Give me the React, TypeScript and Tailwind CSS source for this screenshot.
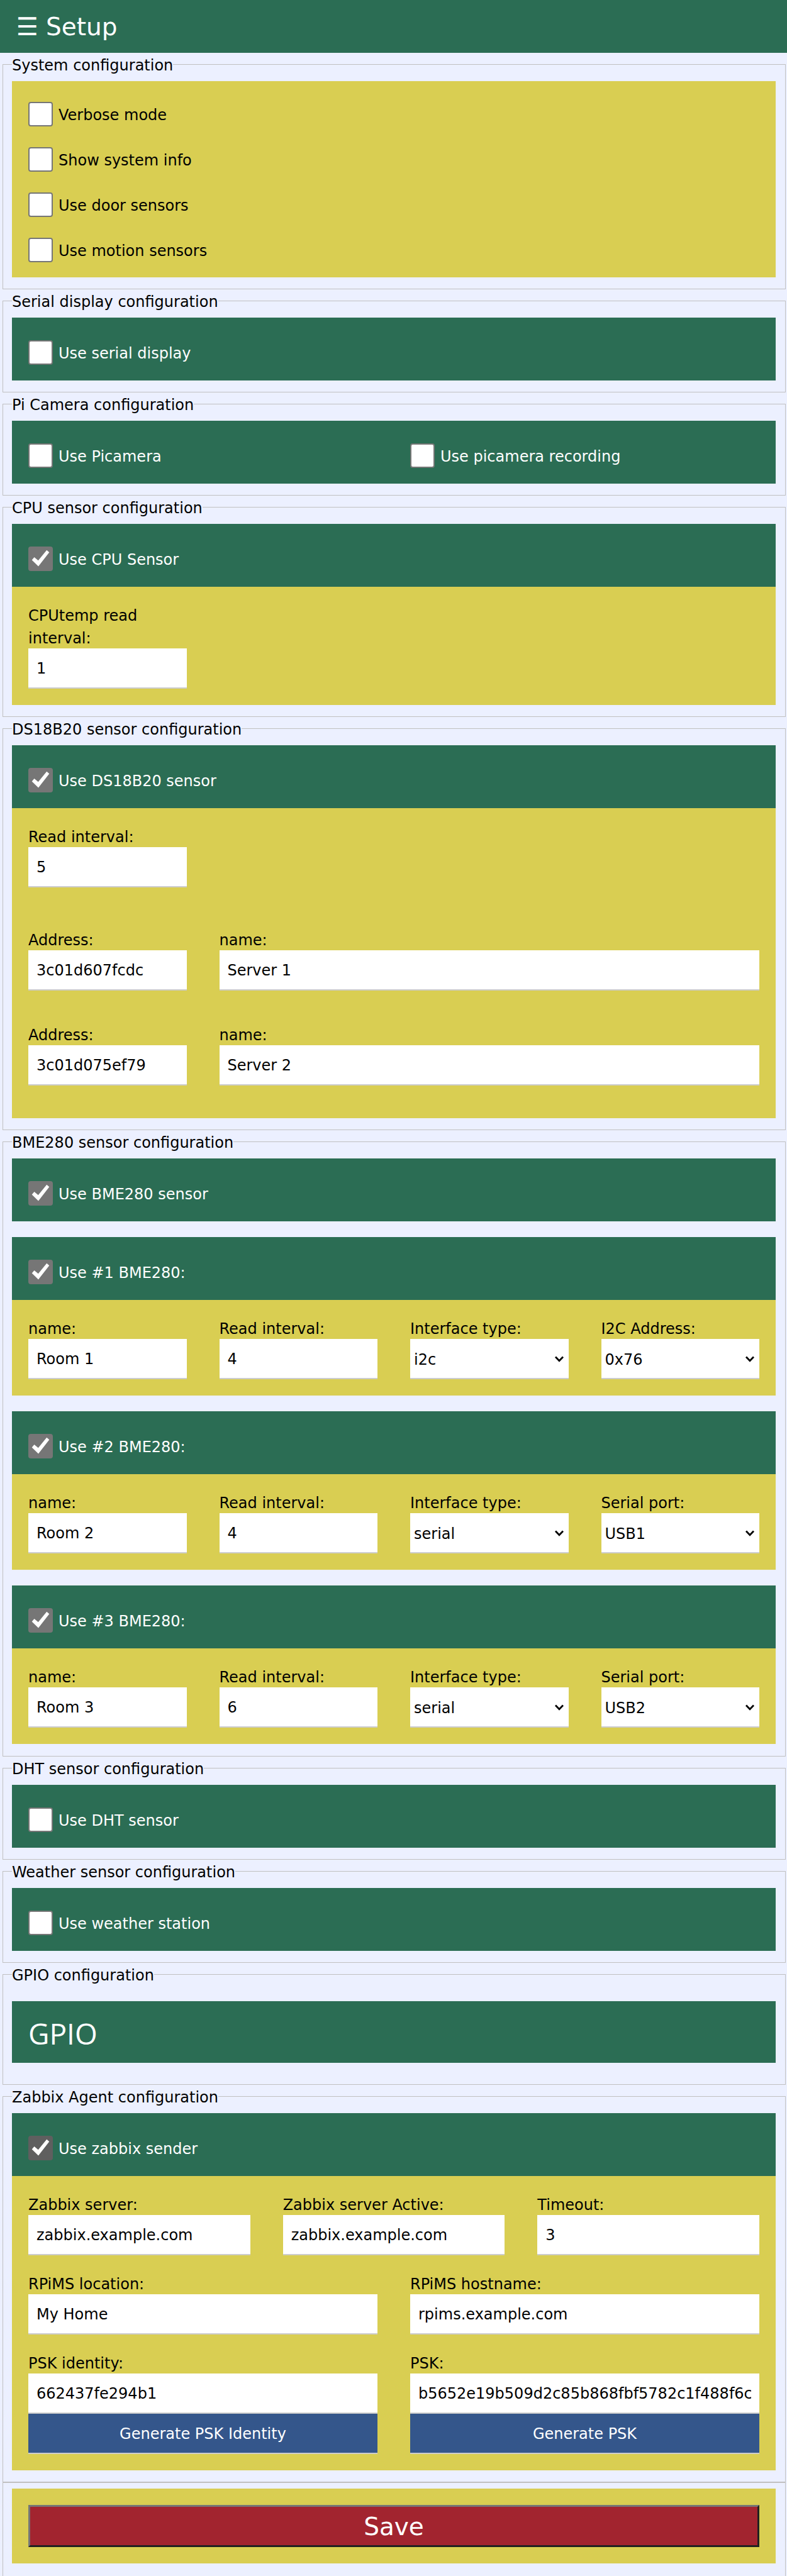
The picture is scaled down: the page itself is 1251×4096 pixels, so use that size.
import React from "react";

function Section({ title, children }: { title: string; children: React.ReactNode }) {
  return (
    <fieldset className="ml-1 mr-0.5 min-w-0 border border-[#c0c0c0] pt-[9px] pr-[15px] pb-[18px] pl-[14px]">
      <legend className="leading-[36px]">
        <span className="-mb-0.5 block pt-0.5">{title}</span>
      </legend>
      {children}
    </fieldset>
  );
}

function Check({ label, checked = false, active = false }: { label: string; checked?: boolean; active?: boolean }) {
  return (
    <label className="flex items-center gap-[9px]">
      <span className="grid shrink-0">
        <input
          type="checkbox"
          defaultChecked={checked}
          className={
            "peer col-start-1 row-start-1 size-[39px] appearance-none rounded-[4px] border-2 border-[#767676] bg-white " +
            (active ? "checked:border-[#5f5f5f] checked:bg-[#5f5f5f]" : "checked:bg-[#767676]")
          }
        />
        <svg
          viewBox="0 0 48 48"
          aria-hidden="true"
          className="pointer-events-none invisible col-start-1 row-start-1 size-[39px] peer-checked:visible"
        >
          <path d="M7 26.5 11.7 21 19.4 27.5 36 7 41 11.5 19.7 38.7Z" fill="#fff" />
        </svg>
      </span>
      <span className="pt-[3px] leading-[36px]">{label}</span>
    </label>
  );
}

function GreenBar({ children }: { children: React.ReactNode }) {
  return <div className="grid grid-cols-2 bg-[#2b6d54] pt-9 pb-[25px] text-white">{children}</div>;
}

function Cell({ children, className = "" }: { children: React.ReactNode; className?: string }) {
  return <div className={"min-w-0 px-[26px] " + className}>{children}</div>;
}

function Field({ label, value, className = "" }: { label: string; value: string; className?: string }) {
  return (
    <label className={"block min-w-0 px-[26px] " + className}>
      <span className="-mb-0.5 block pt-0.5 leading-[36px]">{label}</span>
      <input
        type="text"
        defaultValue={value}
        className="block h-16 w-full border-b-2 border-[#ccc] bg-white px-[13px] pt-0.5 text-black outline-none"
      />
    </label>
  );
}

function SelectField({ label, value, options }: { label: string; value: string; options: string[] }) {
  return (
    <label className="block min-w-0 px-[26px]">
      <span className="-mb-0.5 block pt-0.5 leading-[36px]">{label}</span>
      <span className="grid items-center">
        <select
          defaultValue={value}
          className="col-start-1 row-start-1 h-16 w-full appearance-none border-b-2 border-[#ccc] bg-white px-[6px] pt-1 text-black outline-none"
        >
          {options.map((o) => (
            <option key={o}>{o}</option>
          ))}
        </select>
        <svg
          viewBox="0 0 16 10"
          aria-hidden="true"
          className="pointer-events-none col-start-1 row-start-1 mr-[7px] h-[10px] w-4 justify-self-end"
        >
          <path d="M2 1.5 8 7.7 14 1.5" fill="none" stroke="#000" strokeWidth="2.8" />
        </svg>
      </span>
    </label>
  );
}

const rooms = [
  { n: 1, name: "Room 1", interval: "4", type: "i2c", portLabel: "I2C Address:", port: "0x76", ports: ["0x76", "0x77"] },
  { n: 2, name: "Room 2", interval: "4", type: "serial", portLabel: "Serial port:", port: "USB1", ports: ["USB1", "USB2"] },
  { n: 3, name: "Room 3", interval: "6", type: "serial", portLabel: "Serial port:", port: "USB2", ports: ["USB1", "USB2"] },
];

const actionButton = "block h-16 w-full border-b-2 border-[#ccc] bg-[#34568b] pt-0.5 text-center text-white";

export default function App() {
  return (
    <div className="min-h-screen bg-[#ecf0ff] font-[Verdana,'DejaVu_Sans',sans-serif] text-[24px] text-black">
      <header className="flex h-[84px] items-center gap-3 bg-[#2b6d54] px-[26px] pt-0.5 text-[39px] text-white">
        <button type="button" aria-label="Open menu">
          ☰
        </button>
        <h1>Setup</h1>
      </header>
      <form onSubmit={(e) => e.preventDefault()}>
        <Section title="System configuration">
          <div className="flex flex-col gap-[33px] bg-[#d9ce52] px-[26px] pt-[33px] pb-6">
            <Check label="Verbose mode" />
            <Check label="Show system info" />
            <Check label="Use door sensors" />
            <Check label="Use motion sensors" />
          </div>
        </Section>

        <Section title="Serial display configuration">
          <GreenBar>
            <Cell>
              <Check label="Use serial display" />
            </Cell>
          </GreenBar>
        </Section>

        <Section title="Pi Camera configuration">
          <GreenBar>
            <Cell>
              <Check label="Use Picamera" />
            </Cell>
            <Cell>
              <Check label="Use picamera recording" />
            </Cell>
          </GreenBar>
        </Section>

        <Section title="CPU sensor configuration">
          <GreenBar>
            <Cell>
              <Check label="Use CPU Sensor" checked />
            </Cell>
          </GreenBar>
          <div className="grid grid-cols-4 bg-[#d9ce52] py-[26px]">
            <Field label="CPUtemp read interval:" value="1" />
          </div>
        </Section>

        <Section title="DS18B20 sensor configuration">
          <GreenBar>
            <Cell>
              <Check label="Use DS18B20 sensor" checked />
            </Cell>
          </GreenBar>
          <div className="bg-[#d9ce52] pt-[26px] pb-[52px]">
            <div className="grid grid-cols-4">
              <Field label="Read interval:" value="5" />
            </div>
            <div className="mt-16 grid grid-cols-4 gap-y-[51px]">
              <Field label="Address:" value="3c01d607fcdc" />
              <Field label="name:" value="Server 1" className="col-span-3" />
              <Field label="Address:" value="3c01d075ef79" />
              <Field label="name:" value="Server 2" className="col-span-3" />
            </div>
          </div>
        </Section>

        <Section title="BME280 sensor configuration">
          <div className="flex flex-col gap-[25px] pb-px">
            <GreenBar>
              <Cell>
                <Check label="Use BME280 sensor" checked />
              </Cell>
            </GreenBar>
            {rooms.map((r) => (
              <div key={r.n}>
                <GreenBar>
                  <Cell>
                    <Check label={`Use #${r.n} BME280:`} checked />
                  </Cell>
                </GreenBar>
                <div className="grid grid-cols-4 bg-[#d9ce52] py-[26px]">
                  <Field label="name:" value={r.name} />
                  <Field label="Read interval:" value={r.interval} />
                  <SelectField label="Interface type:" value={r.type} options={["i2c", "serial"]} />
                  <SelectField label={r.portLabel} value={r.port} options={r.ports} />
                </div>
              </div>
            ))}
          </div>
        </Section>

        <Section title="DHT sensor configuration">
          <GreenBar>
            <Cell>
              <Check label="Use DHT sensor" />
            </Cell>
          </GreenBar>
        </Section>

        <Section title="Weather sensor configuration">
          <GreenBar>
            <Cell>
              <Check label="Use weather station" />
            </Cell>
          </GreenBar>
        </Section>

        <Section title="GPIO configuration">
          <div className="my-4 bg-[#2b6d54] px-[26px] pt-[15px] pb-[11px] text-white">
            <h2 className="font-['Open_Sans','Noto_Sans',sans-serif] text-[46px] leading-[72px]">GPIO</h2>
          </div>
        </Section>

        <Section title="Zabbix Agent configuration">
          <GreenBar>
            <Cell>
              <Check label="Use zabbix sender" checked active />
            </Cell>
          </GreenBar>
          <div className="flex flex-col gap-[26px] bg-[#d9ce52] py-[26px]">
            <div className="grid grid-cols-3">
              <Field label="Zabbix server:" value="zabbix.example.com" />
              <Field label="Zabbix server Active:" value="zabbix.example.com" />
              <Field label="Timeout:" value="3" />
            </div>
            <div className="grid grid-cols-2">
              <Field label="RPiMS location:" value="My Home" />
              <Field label="RPiMS hostname:" value="rpims.example.com" />
            </div>
            <div className="grid grid-cols-2">
              <Field label="PSK identity:" value="662437fe294b1" />
              <Field label="PSK:" value="b5652e19b509d2c85b868fbf5782c1f488f6c" />
              <Cell>
                <button type="button" className={actionButton}>
                  Generate PSK Identity
                </button>
              </Cell>
              <Cell>
                <button type="button" className={actionButton}>
                  Generate PSK
                </button>
              </Cell>
            </div>
          </div>
        </Section>

        <fieldset className="ml-1 mr-0.5 min-w-0 border border-b-0 border-[#c0c0c0] pt-[9px] pr-[15px] pb-5 pl-[14px]">
          <div className="bg-[#d9ce52] px-[26px] py-[26px]">
            <button
              type="submit"
              className="block h-[67px] w-full border-[3px] border-t-[#767676] border-r-[#212121] border-b-[#212121] border-l-[#767676] bg-[#a2242f] pt-0.5 text-center text-[39px] leading-[59px] text-white"
            >
              Save
            </button>
          </div>
        </fieldset>
      </form>
    </div>
  );
}
